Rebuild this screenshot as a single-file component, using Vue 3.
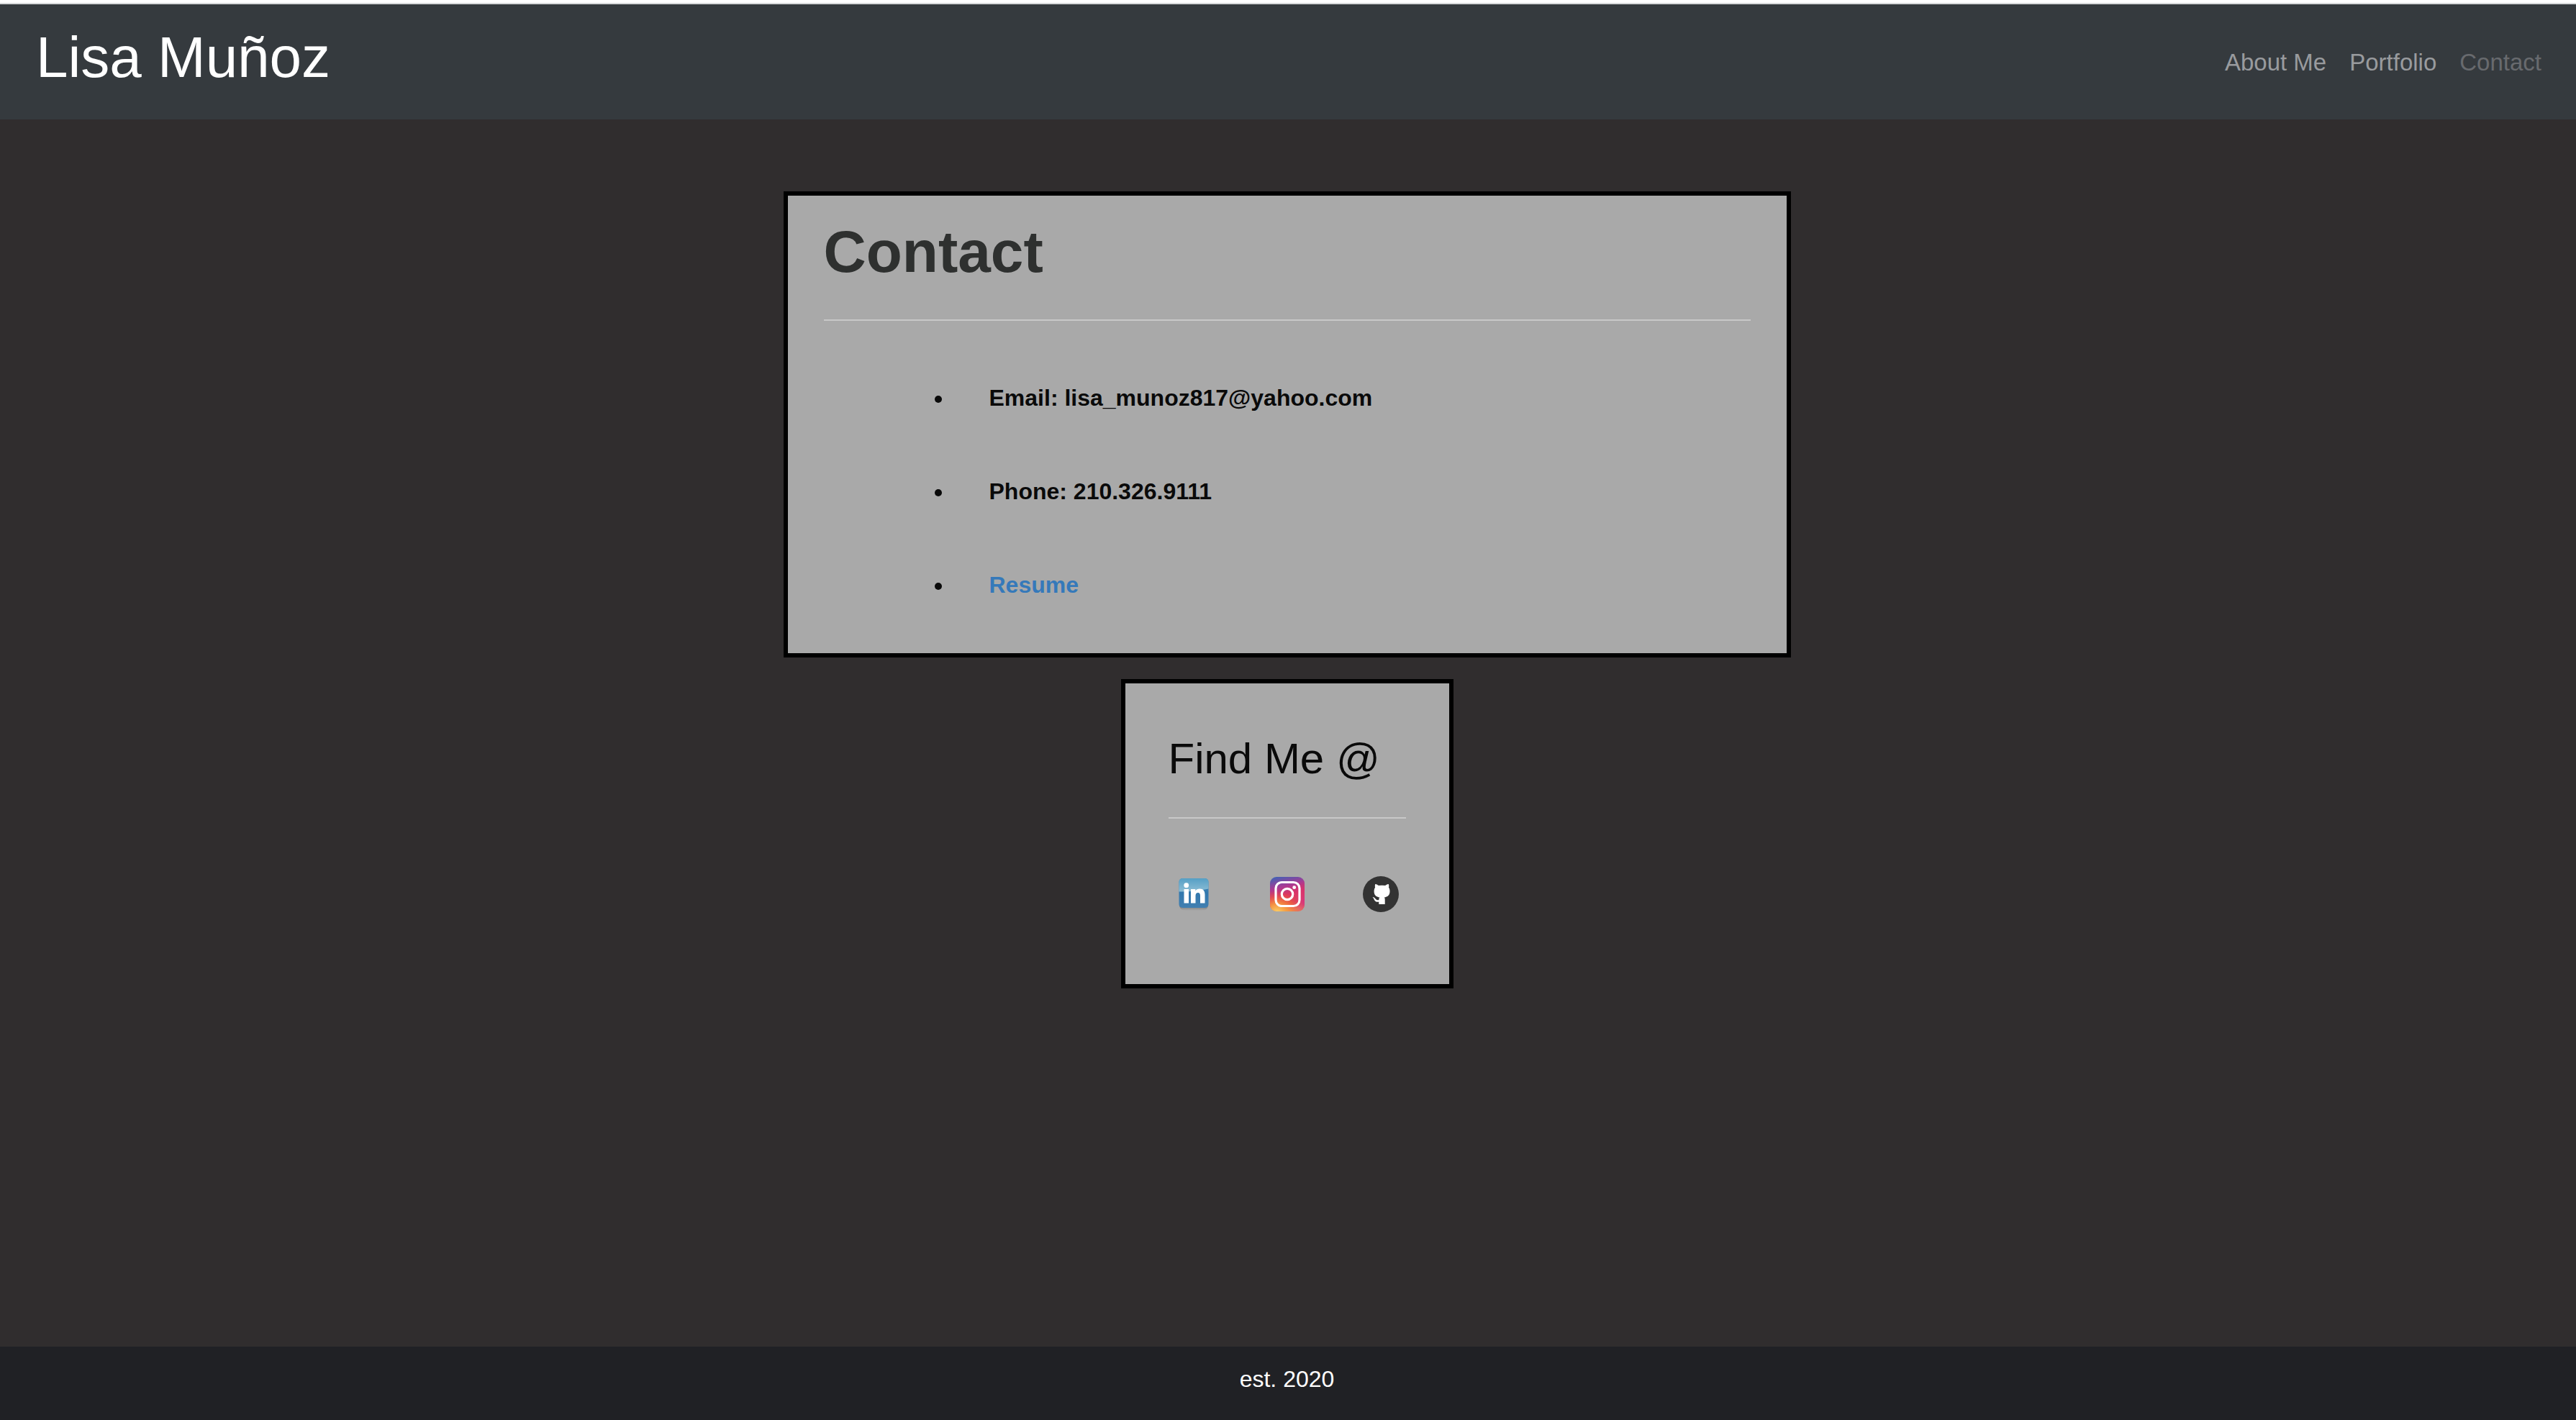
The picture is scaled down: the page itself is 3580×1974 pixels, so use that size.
<script setup>
const navLinks = [
  { label: 'About Me', href: '#about' },
  { label: 'Portfolio', href: '#portfolio' },
  { label: 'Contact', href: '#contact', active: true },
]
</script>

<template>
  <div class="page">
    <header class="site-header">
      <div class="brand">Lisa Muñoz</div>
      <nav class="nav" aria-label="Main">
        <a
          v-for="link in navLinks"
          :key="link.label"
          :href="link.href"
          class="nav-link"
          :class="{ active: link.active }"
        >{{ link.label }}</a>
      </nav>
    </header>

    <main class="content">
      <section class="card contact">
        <h1 class="title">Contact</h1>
        <hr class="rule" />
        <ul class="details">
          <li>Email: lisa_munoz817@yahoo.com</li>
          <li>Phone: 210.326.9111</li>
          <li><a class="resume" href="#resume">Resume</a></li>
        </ul>
      </section>

      <section class="card social">
        <h2 class="subtitle">Find Me @</h2>
        <hr class="rule" />
        <div class="icons">
          <a href="#linkedin" aria-label="LinkedIn">
            <svg class="icon" viewBox="0 0 50 50">
              <defs>
                <linearGradient id="liBase" x1="0" y1="0" x2="0" y2="1">
                  <stop offset="0" stop-color="#4b93bd" />
                  <stop offset="0.5" stop-color="#3278ae" />
                  <stop offset="1" stop-color="#427fb0" />
                </linearGradient>
                <linearGradient id="liGloss" x1="0" y1="0" x2="0" y2="1">
                  <stop offset="0" stop-color="#559fc5" />
                  <stop offset="1" stop-color="#8cbdd5" />
                </linearGradient>
                <linearGradient id="liShadow" x1="0" y1="0" x2="0" y2="1">
                  <stop offset="0" stop-color="#555" stop-opacity="0.9" />
                  <stop offset="1" stop-color="#777" stop-opacity="0" />
                </linearGradient>
              </defs>
              <path d="M5 40h40c0 5-4 8-9 8H14c-5 0-9-3-9-8z" fill="url(#liShadow)" />
              <rect x="4.500" y="3" width="41" height="41" rx="5" fill="url(#liBase)" />
              <path d="M9.500 3h31a5 5 0 0 1 5 5v9.500Q26 22 4.500 21.500V8a5 5 0 0 1 5-5z" fill="url(#liGloss)" />
              <g fill="#fff">
                <circle cx="14.700" cy="12.700" r="3.400" />
                <rect x="11.500" y="18" width="6.500" height="19.500" />
                <path d="M21 18h6.300v2.600c1.200-1.900 3.200-3.100 6-3.100 5 0 7.200 3.200 7.200 8.200v11.800H34V27.200c0-2.700-1-4.200-3-4.200-2.200 0-3.500 1.600-3.500 4.200v10.300H21z" />
              </g>
            </svg>
          </a>
          <a href="#instagram" aria-label="Instagram">
            <svg class="icon" viewBox="0 0 50 50">
              <defs>
                <linearGradient id="igBase" x1="0.200" y1="0" x2="0.450" y2="1">
                  <stop offset="0" stop-color="#4560b4" />
                  <stop offset="0.300" stop-color="#a83a94" />
                  <stop offset="0.550" stop-color="#dd3560" />
                  <stop offset="0.800" stop-color="#e95a3c" />
                  <stop offset="1" stop-color="#f2a04c" />
                </linearGradient>
                <radialGradient id="igWarm" cx="0.200" cy="1.050" r="0.650">
                  <stop offset="0" stop-color="#fbd76c" />
                  <stop offset="0.400" stop-color="#f7a344" stop-opacity="0.850" />
                  <stop offset="1" stop-color="#ee5535" stop-opacity="0" />
                </radialGradient>
                <radialGradient id="igPink" cx="1.050" cy="0.700" r="0.600">
                  <stop offset="0" stop-color="#d52f87" />
                  <stop offset="1" stop-color="#d52f72" stop-opacity="0" />
                </radialGradient>
              </defs>
              <rect x="1" y="1" width="48" height="48" rx="9" fill="url(#igBase)" />
              <rect x="1" y="1" width="48" height="48" rx="9" fill="url(#igPink)" />
              <rect x="1" y="1" width="48" height="48" rx="9" fill="url(#igWarm)" />
              <rect x="9" y="8.500" width="33" height="33" rx="8.500" fill="none" stroke="#fff" stroke-width="3.200" />
              <circle cx="25" cy="25" r="7.700" fill="none" stroke="#fff" stroke-width="3.200" />
              <circle cx="34.700" cy="15.700" r="2.400" fill="#fff" />
            </svg>
          </a>
          <a href="#github" aria-label="GitHub">
            <svg class="icon" viewBox="0 0 50 50">
              <circle cx="25" cy="25" r="25" fill="#333" />
              <path
                fill="#fff"
                d="M17.300 11c1.800 0 3.600 1.200 4.600 2.100q4.600-.800 9.200 0c1-.900 2.800-2.100 4.600-2.100.800 1.800.600 3.600.300 4.700 1 1.400 1.500 3 1.500 5.300 0 5.500-3 7.700-7.700 8.500.600.800.900 1.600.900 2.900V39H22.300v-3.300c-3.700.500-5.400-.700-6.500-3-.600-1.400-1.200-2.400-2.300-3.100.700-.900 2.400-.500 3.500 1.200 1.300 2 2.500 2.800 5.300 2.200 0-1.500.300-2.700 1-3.500-4.700-.800-7.700-3-7.700-8.500 0-2.300.500-3.900 1.500-5.300-.300-1.100-.500-2.900.200-4.700z"
              />
            </svg>
          </a>
        </div>
      </section>
    </main>

    <footer class="site-footer">est. 2020</footer>
  </div>
</template>

<style>
body {
  margin: 0;
  background: #302d2e;
}
</style>

<style scoped>
.page {
  display: flex;
  flex-direction: column;
  min-height: 100vh;
  box-sizing: border-box;
  border-top: 4px solid #fff;
  background: #302d2e;
  color: #0a0a0a;
  font-family: "Helvetica Neue", Helvetica, "Liberation Sans", Arial, sans-serif;
  font-size: 32px;
  line-height: 46px;
}

.site-header {
  display: flex;
  justify-content: space-between;
  padding: 30px 48px 42px 50px;
  border-top: 2px solid #d7d9da;
  background: #353a3e;
}

.brand {
  color: #fff;
  font-size: 80px;
  line-height: 88px;
}

.nav {
  display: flex;
  gap: 32px;
  padding-top: 28px;
  font-size: 33px;
}

.nav-link {
  color: #999b9e;
  text-decoration: none;
}

.nav-link.active {
  color: #686a6e;
}

.content {
  flex: 1;
  display: flex;
  flex-direction: column;
  align-items: center;
  gap: 30px;
  padding: 100px 3px 30px 0;
}

.card {
  box-sizing: border-box;
  border: 6px solid #000;
  background: #a9a9a9;
}

.contact {
  width: 100%;
  max-width: 1400px;
  padding: 34px 50px 30px;
}

.title {
  margin: 0;
  color: #2e302f;
  font-size: 82px;
  line-height: 88px;
}

.rule {
  height: 2px;
  margin: 50px 0 42px;
  border: 0;
  background: #c8c8c8;
}

.details {
  margin: 0;
  padding-left: 180px;
  font-weight: bold;
  line-height: 130px;
}

.details li {
  padding-left: 50px;
}

.resume {
  color: #3579ba;
  text-decoration: none;
}

.social {
  padding: 72px 60px 100px;
  width: 462px;
}

.subtitle {
  margin: 0;
  font-size: 60px;
  font-weight: normal;
  line-height: 66px;
  white-space: nowrap;
}

.social .rule {
  margin: 48px 0 80px;
}

.icons {
  display: flex;
  justify-content: space-between;
  padding: 0 10px;
}

.icon {
  display: block;
  width: 50px;
  height: 50px;
}

.site-footer {
  padding: 22px 3px 34px 0;
  background: #202125;
  color: #fff;
  text-align: center;
}
</style>
